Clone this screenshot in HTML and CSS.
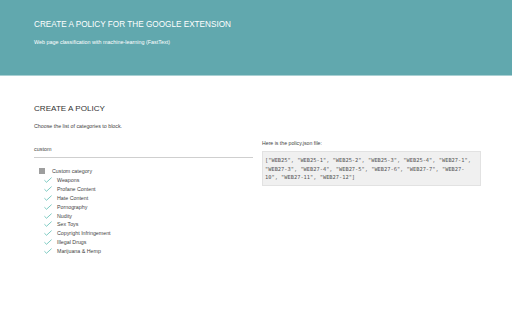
FILE: index.html
```html
<!DOCTYPE html>
<html>
<head>
<meta charset="utf-8">
<link rel="stylesheet" href="styles.css">
</head>
<body>
<header class="hero">
  <h1 class="hero-title">CREATE A POLICY FOR THE GOOGLE EXTENSION</h1>
  <p class="hero-sub">Web page classification with machine-learning (FastText)</p>
</header>
<main class="main">
  <h2 class="section-title">CREATE A POLICY</h2>
  <p class="section-desc">Choose the list of categories to block.</p>
  <div class="columns">
    <div class="left">
      <div class="select">custom</div>
      <ul class="tree">
        <li class="parent"><span class="box"></span><span>Custom category</span></li>
        <li class="child"><svg class="check" viewBox="0 0 10 7"><path d="M0.5 3.8 L3.2 6.3 L9.5 0.5"/></svg><span>Weapons</span></li>
        <li class="child"><svg class="check" viewBox="0 0 10 7"><path d="M0.5 3.8 L3.2 6.3 L9.5 0.5"/></svg><span>Profane Content</span></li>
        <li class="child"><svg class="check" viewBox="0 0 10 7"><path d="M0.5 3.8 L3.2 6.3 L9.5 0.5"/></svg><span>Hate Content</span></li>
        <li class="child"><svg class="check" viewBox="0 0 10 7"><path d="M0.5 3.8 L3.2 6.3 L9.5 0.5"/></svg><span>Pornography</span></li>
        <li class="child"><svg class="check" viewBox="0 0 10 7"><path d="M0.5 3.8 L3.2 6.3 L9.5 0.5"/></svg><span>Nudity</span></li>
        <li class="child"><svg class="check" viewBox="0 0 10 7"><path d="M0.5 3.8 L3.2 6.3 L9.5 0.5"/></svg><span>Sex Toys</span></li>
        <li class="child"><svg class="check" viewBox="0 0 10 7"><path d="M0.5 3.8 L3.2 6.3 L9.5 0.5"/></svg><span>Copyright Infringement</span></li>
        <li class="child"><svg class="check" viewBox="0 0 10 7"><path d="M0.5 3.8 L3.2 6.3 L9.5 0.5"/></svg><span>Illegal Drugs</span></li>
        <li class="child"><svg class="check" viewBox="0 0 10 7"><path d="M0.5 3.8 L3.2 6.3 L9.5 0.5"/></svg><span>Marijuana &amp; Hemp</span></li>
      </ul>
    </div>
    <div class="right">
      <p class="json-label">Here is the policy.json file:</p>
<pre class="code">["WEB25", "WEB25-1", "WEB25-2", "WEB25-3", "WEB25-4", "WEB27-1",
"WEB27-3", "WEB27-4", "WEB27-5", "WEB27-6", "WEB27-7", "WEB27-
10", "WEB27-11", "WEB27-12"]</pre>
    </div>
  </div>
</main>
</body>
</html>
```
FILE: styles.css
```css
html, body {
  margin: 0;
  padding: 0;
  background: #ffffff;
  font-family: "Liberation Sans", Arial, sans-serif;
}
.hero {
  background: #61a8ae;
  height: 76px;
  box-sizing: border-box;
  padding: 19px 34px 0;
  border-bottom: 1px solid #a9d0d3;
}
.hero-title {
  margin: 0;
  font-weight: normal;
  font-size: 8.2px;
  line-height: 11px;
  color: #ffffff;
}
.hero-sub {
  margin: 9px 0 0;
  font-size: 5.4px;
  line-height: 7px;
  color: #ffffff;
}
.main {
  padding: 27px 31px 0 34px;
}
.section-title {
  margin: 0;
  font-weight: normal;
  font-size: 8.1px;
  line-height: 11px;
  color: #333333;
}
.section-desc {
  margin: 9px 0 0;
  font-size: 5.3px;
  line-height: 7px;
  color: #444444;
}
.columns {
  display: flex;
  gap: 9px;
  margin-top: 8px;
}
.left {
  width: 219px;
  flex: none;
}
.select {
  font-size: 5.4px;
  line-height: 7px;
  color: #444444;
  padding-top: 8px;
  padding-bottom: 4px;
  border-bottom: 1px solid #cfcfcf;
}
.tree {
  list-style: none;
  margin: 9px 0 0;
  padding: 0;
}
.tree li {
  display: flex;
  align-items: center;
  height: 8.85px;
  font-size: 5.3px;
  color: #444444;
}
.parent {
  padding-left: 5px;
}
.box {
  width: 6px;
  height: 6px;
  background: #9e9e9e;
  margin-right: 7px;
}
.child {
  padding-left: 10px;
}
.check {
  width: 8px;
  height: 6px;
  margin-right: 5px;
  fill: none;
  stroke: #4db6ac;
  stroke-width: 0.9;
}
.right {
  flex: 1;
  padding-top: 2px;
}
.json-label {
  margin: 0;
  font-size: 5.2px;
  line-height: 7px;
  color: #444444;
}
.code {
  margin: 4px 0 0;
  padding: 4px 2px 3px;
  background: #f0f0f0;
  border: 1px solid #e2e2e2;
  font-family: "DejaVu Sans Mono", monospace;
  font-size: 5.35px;
  line-height: 8.6px;
  color: #555555;
  white-space: pre;
}
```
